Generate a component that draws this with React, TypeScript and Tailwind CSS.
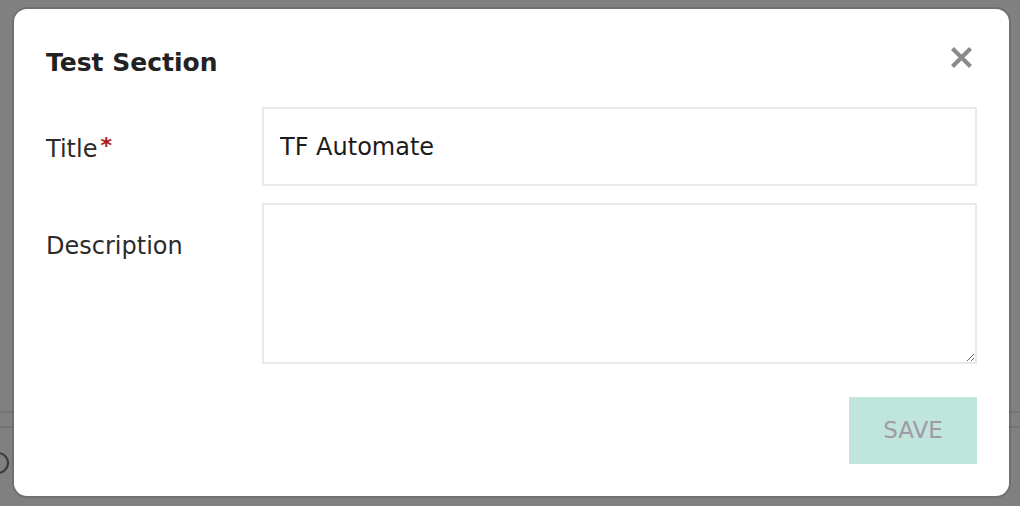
import { useState } from 'react'

function CloseIcon() {
  return (
    <svg width="23" height="23" viewBox="0 0 23 23" fill="none">
      <path d="M2.5 2.5 L20.5 20.5 M20.5 2.5 L2.5 20.5" stroke="#8a8a8a" strokeWidth="4.2" strokeLinecap="butt" />
    </svg>
  )
}

export default function App() {
  const [title, setTitle] = useState('TF Automate')
  const [description, setDescription] = useState('')

  return (
    <div className="relative h-[506px] w-[1020px] overflow-hidden bg-[#808080] font-['DejaVu_Sans',sans-serif]">
      {/* page behind the overlay */}
      <div className="pt-[411px]">
        <div className="h-[17px] border-y-2 border-[#757575]" />
        <div className="-ml-[13px] mt-[24px] h-[22px] w-[22px] rounded-full border-2 border-[#3a3a3a]" />
      </div>

      <div className="absolute inset-0 flex pl-[14px] pt-[9px]">
        <div className="h-[487px] w-[995px] rounded-[13px] bg-white px-8 pb-8 shadow-[0_0_0_2px_rgba(0,0,0,0.12)]">
          <div className="flex items-start justify-between pt-[37px]">
            <h2 className="mt-[4px] text-[25px] font-bold leading-[25px] text-[#222222]">Test Section</h2>
            <button className="mr-[4px]" aria-label="Close">
              <CloseIcon />
            </button>
          </div>

          <div className="mt-[32px] flex flex-col gap-[17px]">
            <div className="flex items-start">
              <label className="flex w-[216px] flex-none pt-[30px] text-[24px] leading-[24px] text-[#2b2b2b]">
                Title
                <span className="ml-[3px] -mt-[3px] text-[22px] font-bold text-[#ad1b14]">*</span>
              </label>
              <input
                className="h-[79px] min-w-0 flex-1 border-2 border-[#e9e9e9] px-4 text-[24px] text-[#1c1c1c] outline-none"
                value={title}
                onChange={(e) => setTitle(e.target.value)}
              />
            </div>
            <div className="flex items-start">
              <label className="w-[216px] flex-none pt-[31px] text-[24px] leading-[24px] text-[#2b2b2b]">
                Description
              </label>
              <textarea
                className="h-[161px] min-w-0 flex-1 resize-y border-2 border-[#e9e9e9] px-4 py-3 text-[24px] outline-none"
                value={description}
                onChange={(e) => setDescription(e.target.value)}
              />
            </div>
          </div>

          <div className="mt-[33px] flex justify-end">
            <button className="h-[67px] w-[128px] bg-[#bfe5dc] text-[23px] text-[#9f9ba6]" disabled>
              SAVE
            </button>
          </div>
        </div>
      </div>
    </div>
  )
}
